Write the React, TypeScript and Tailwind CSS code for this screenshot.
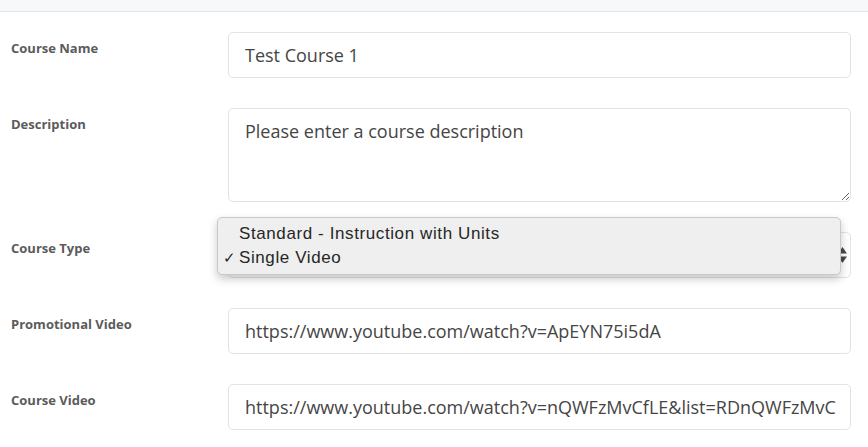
import React from "react";

const labelCls =
  "w-[228px] shrink-0 pl-[11px] pt-[7px] text-[13px] font-bold text-[#5b5b5b] leading-[18px]";
const inputCls =
  "w-[623px] h-[46px] rounded-[5px] border border-[#e3e3e3] bg-white pl-[16px] pr-[14px] text-[18px] text-[#454545] outline-none";

function Row({ label, children }: { label: string; children: React.ReactNode }) {
  return (
    <div className="flex">
      <div className={labelCls}>{label}</div>
      {children}
    </div>
  );
}

export default function App() {
  return (
    <div
      className="w-[868px] h-[447px] overflow-hidden bg-white"
      style={{ fontFamily: '"Open Sans", "Liberation Sans", sans-serif' }}
    >
      <div className="h-[12px] bg-[#f7f8fa] border-b border-[#e4e5e7]" />
      <div className="flex flex-col gap-[30px] pt-[20px]">
        <Row label="Course Name">
          <input className={inputCls} readOnly value="Test Course 1" />
        </Row>
        <Row label="Description">
          <textarea
            className="w-[623px] h-[94px] rounded-[5px] border border-[#e3e3e3] bg-white pl-[16px] pt-[9px] text-[18px] leading-[26px] text-[#454545] outline-none"
            readOnly
            value="Please enter a course description"
          />
        </Row>
        <Row label="Course Type">
          <div className="relative w-[623px] h-[46px] rounded-[5px] border border-[#e3e3e3] bg-white">
            <svg
              className="absolute right-[3px] top-[14px]"
              width="9"
              height="16"
              viewBox="0 0 9 16"
            >
              <path d="M4.5 0 L9 6.5 L0 6.5 Z" fill="#4a4a4a" />
              <path d="M0 9.5 L9 9.5 L4.5 16 Z" fill="#4a4a4a" />
            </svg>
            <div
              className="absolute left-[-12px] top-[-16px] w-[624px] h-[58px] rounded-[5px] border border-[#c9c9c9] bg-[#efefef] py-[4px] shadow-[0_4px_9px_rgba(0,0,0,0.22)] text-[17px] tracking-[0.6px] text-[#262626]"
              style={{ fontFamily: '"Liberation Sans", Arial, sans-serif' }}
            >
              <div className="h-[24px] leading-[24px] pl-[21px]">
                Standard - Instruction with Units
              </div>
              <div className="relative h-[24px] leading-[24px] pl-[21px]">
                <span className="absolute left-[5px] top-0 text-[15px]">✓</span>
                Single Video
              </div>
            </div>
          </div>
        </Row>
        <Row label="Promotional Video">
          <input
            className={inputCls}
            readOnly
            value="https://www.youtube.com/watch?v=ApEYN75i5dA"
          />
        </Row>
        <Row label="Course Video">
          <input
            className={inputCls}
            readOnly
            value="https://www.youtube.com/watch?v=nQWFzMvCfLE&list=RDnQWFzMvCfLE"
          />
        </Row>
      </div>
    </div>
  );
}
